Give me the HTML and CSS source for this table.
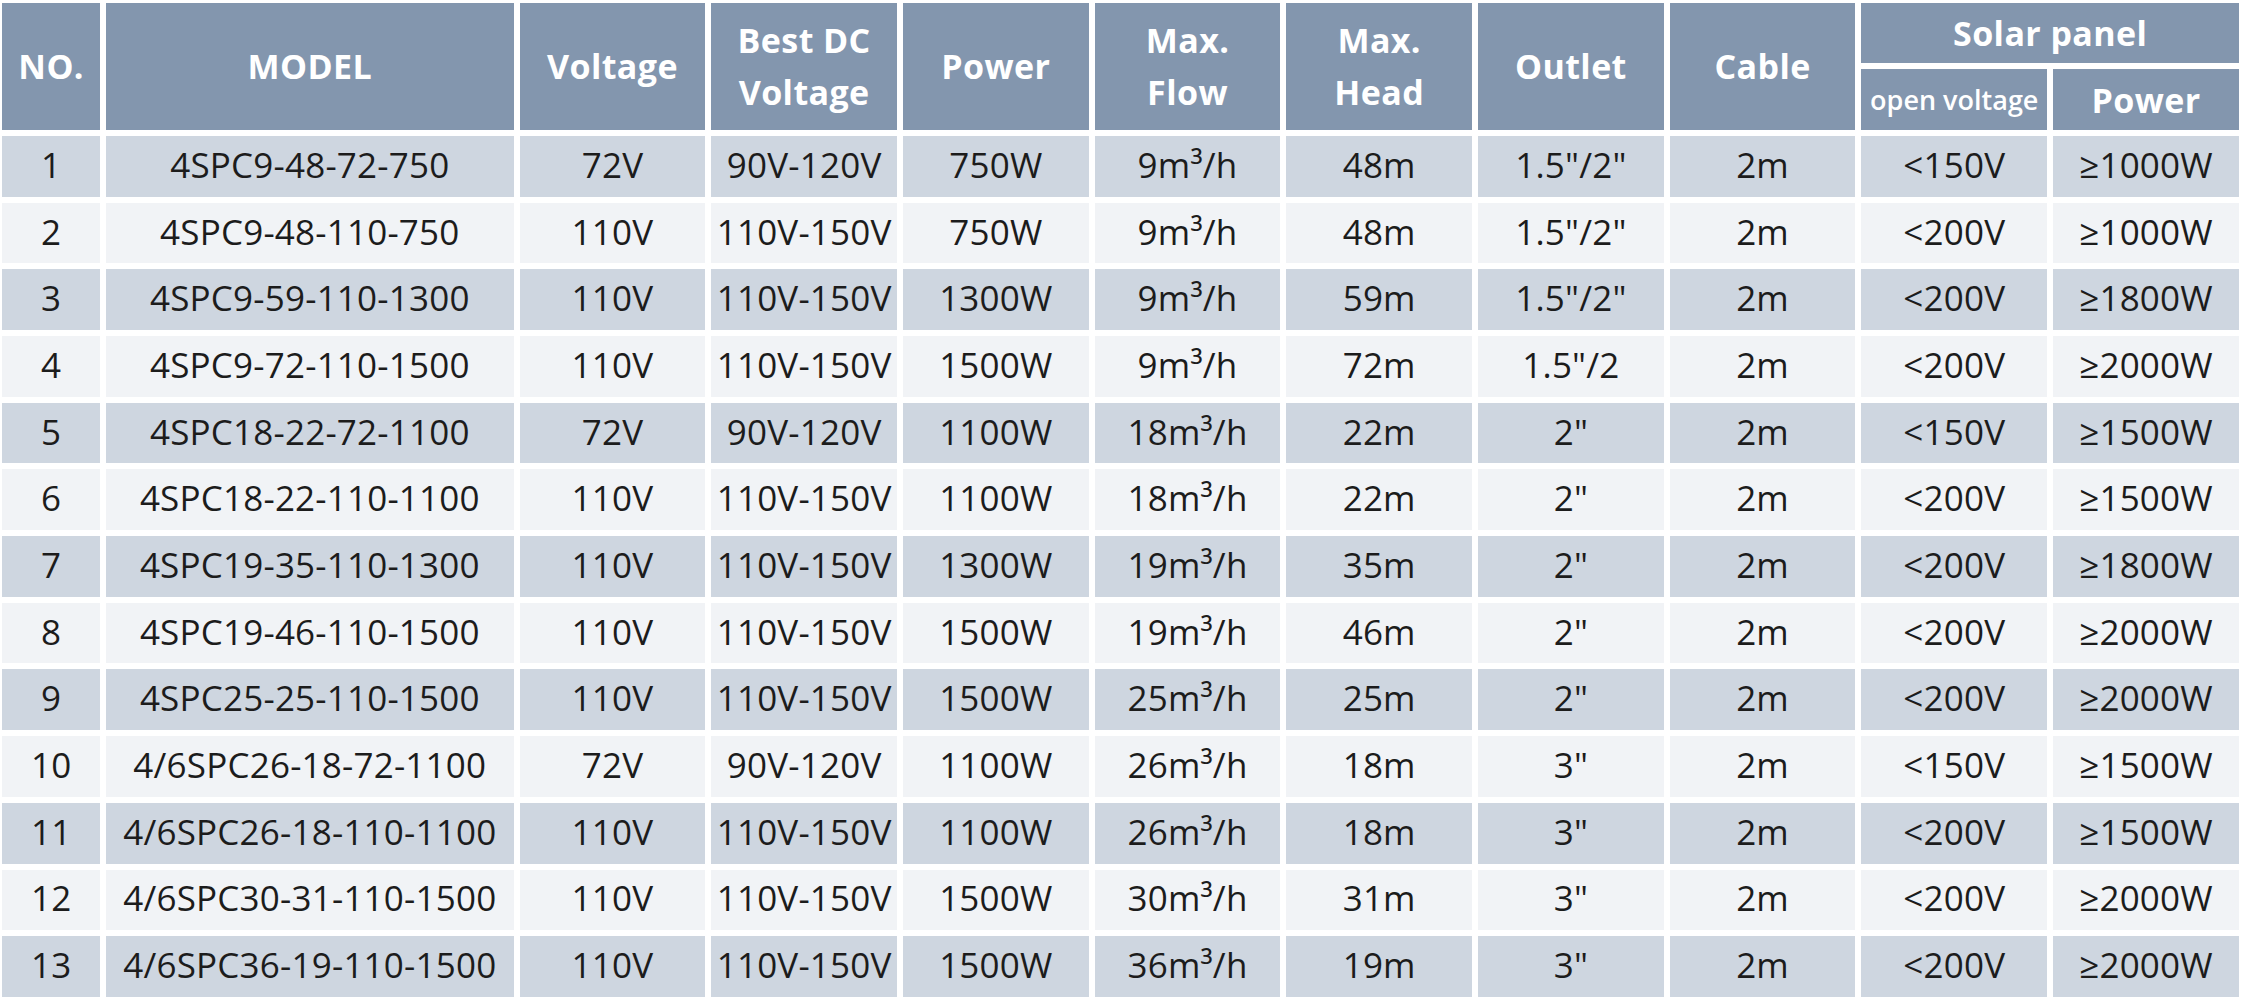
FILE: index.html
```html
<!DOCTYPE html>
<html lang="en">
<head>
<meta charset="utf-8">
<title>Solar Pump Specifications</title>
<link rel="stylesheet" href="styles.css">
</head>
<body>
<table class="spec">
  <colgroup>
    <col class="c-no">
    <col class="c-model">
    <col class="c-std"><col class="c-std"><col class="c-std"><col class="c-std"><col class="c-std"><col class="c-std"><col class="c-std"><col class="c-std"><col class="c-std">
  </colgroup>
  <thead>
    <tr>
      <th rowspan="2">NO.</th>
      <th rowspan="2">MODEL</th>
      <th rowspan="2">Voltage</th>
      <th rowspan="2">Best DC<br>Voltage</th>
      <th rowspan="2">Power</th>
      <th rowspan="2">Max.<br>Flow</th>
      <th rowspan="2">Max.<br>Head</th>
      <th rowspan="2">Outlet</th>
      <th rowspan="2">Cable</th>
      <th colspan="2">Solar panel</th>
    </tr>
    <tr>
      <th class="small">open voltage</th>
      <th>Power</th>
    </tr>
  </thead>
  <tbody>
    <tr><td>1</td><td>4SPC9-48-72-750</td><td>72V</td><td>90V-120V</td><td>750W</td><td>9m³/h</td><td>48m</td><td>1.5"/2"</td><td>2m</td><td>&lt;150V</td><td>≥1000W</td></tr>
    <tr><td>2</td><td>4SPC9-48-110-750</td><td>110V</td><td>110V-150V</td><td>750W</td><td>9m³/h</td><td>48m</td><td>1.5"/2"</td><td>2m</td><td>&lt;200V</td><td>≥1000W</td></tr>
    <tr><td>3</td><td>4SPC9-59-110-1300</td><td>110V</td><td>110V-150V</td><td>1300W</td><td>9m³/h</td><td>59m</td><td>1.5"/2"</td><td>2m</td><td>&lt;200V</td><td>≥1800W</td></tr>
    <tr><td>4</td><td>4SPC9-72-110-1500</td><td>110V</td><td>110V-150V</td><td>1500W</td><td>9m³/h</td><td>72m</td><td>1.5"/2</td><td>2m</td><td>&lt;200V</td><td>≥2000W</td></tr>
    <tr><td>5</td><td>4SPC18-22-72-1100</td><td>72V</td><td>90V-120V</td><td>1100W</td><td>18m³/h</td><td>22m</td><td>2"</td><td>2m</td><td>&lt;150V</td><td>≥1500W</td></tr>
    <tr><td>6</td><td>4SPC18-22-110-1100</td><td>110V</td><td>110V-150V</td><td>1100W</td><td>18m³/h</td><td>22m</td><td>2"</td><td>2m</td><td>&lt;200V</td><td>≥1500W</td></tr>
    <tr><td>7</td><td>4SPC19-35-110-1300</td><td>110V</td><td>110V-150V</td><td>1300W</td><td>19m³/h</td><td>35m</td><td>2"</td><td>2m</td><td>&lt;200V</td><td>≥1800W</td></tr>
    <tr><td>8</td><td>4SPC19-46-110-1500</td><td>110V</td><td>110V-150V</td><td>1500W</td><td>19m³/h</td><td>46m</td><td>2"</td><td>2m</td><td>&lt;200V</td><td>≥2000W</td></tr>
    <tr><td>9</td><td>4SPC25-25-110-1500</td><td>110V</td><td>110V-150V</td><td>1500W</td><td>25m³/h</td><td>25m</td><td>2"</td><td>2m</td><td>&lt;200V</td><td>≥2000W</td></tr>
    <tr><td>10</td><td>4/6SPC26-18-72-1100</td><td>72V</td><td>90V-120V</td><td>1100W</td><td>26m³/h</td><td>18m</td><td>3"</td><td>2m</td><td>&lt;150V</td><td>≥1500W</td></tr>
    <tr><td>11</td><td>4/6SPC26-18-110-1100</td><td>110V</td><td>110V-150V</td><td>1100W</td><td>26m³/h</td><td>18m</td><td>3"</td><td>2m</td><td>&lt;200V</td><td>≥1500W</td></tr>
    <tr><td>12</td><td>4/6SPC30-31-110-1500</td><td>110V</td><td>110V-150V</td><td>1500W</td><td>30m³/h</td><td>31m</td><td>3"</td><td>2m</td><td>&lt;200V</td><td>≥2000W</td></tr>
    <tr><td>13</td><td>4/6SPC36-19-110-1500</td><td>110V</td><td>110V-150V</td><td>1500W</td><td>36m³/h</td><td>19m</td><td>3"</td><td>2m</td><td>&lt;200V</td><td>≥2000W</td></tr>
  </tbody>
</table>
</body>
</html>
```

FILE: styles.css
```css
html, body {
  margin: 0;
  padding: 0;
  background: #ffffff;
}

body {
  font-family: "Open Sans", "Noto Sans", "DejaVu Sans", sans-serif;
  overflow: hidden;
}

.spec {
  border-collapse: separate;
  border-spacing: 6px 6px;
  table-layout: fixed;
  width: 2248.6px;
  margin: -3.3px 0 0 -3.7px;
}

.c-no { width: 97.7px; }
.c-model { width: 407.6px; }
.c-std { width: 185.7px; }

.spec th,
.spec td {
  padding: 0;
  text-align: center;
  vertical-align: middle;
  white-space: nowrap;
}

.spec th {
  background: #8396ae;
  color: #ffffff;
  font-weight: 700;
  font-size: 34px;
  letter-spacing: 0.4px;
  line-height: 52px;
  height: 60.65px;
}

.spec th.small {
  font-size: 27px;
  font-weight: 600;
  letter-spacing: 0;
}

.spec td {
  height: 60.7px;
  font-size: 35px;
  letter-spacing: 0.2px;
  line-height: 40px;
  color: #1c1c1c;
  padding-bottom: 3px;
  box-sizing: border-box;
}

.spec tbody tr:nth-child(odd) td {
  background: #ced6e0;
}

.spec tbody tr:nth-child(even) td {
  background: #f1f3f6;
}
```
